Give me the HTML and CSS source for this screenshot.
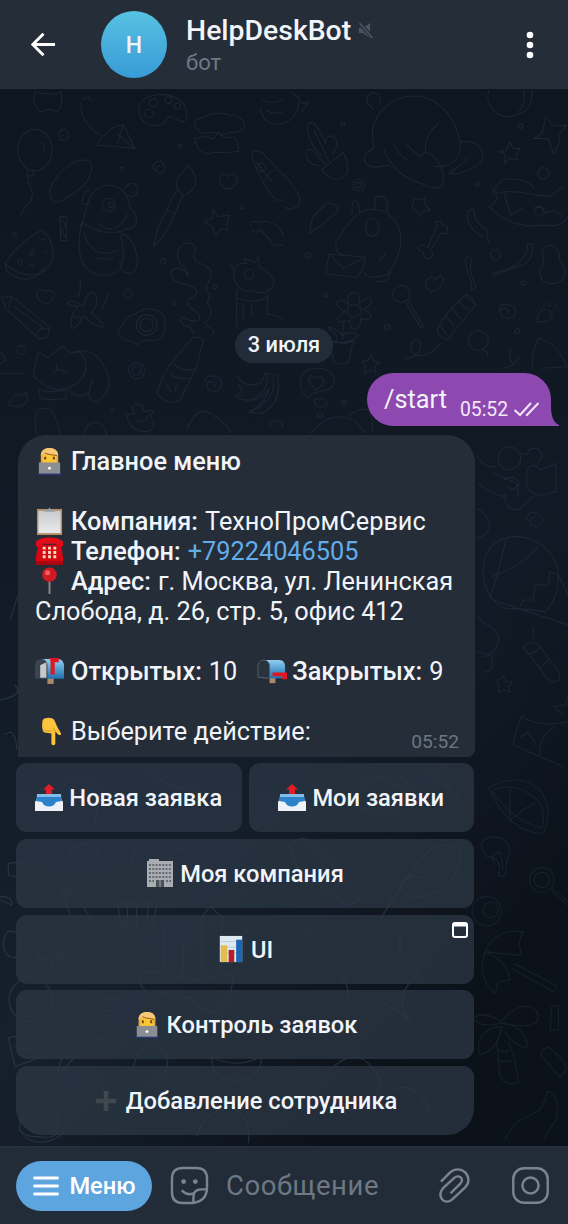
FILE: index.html
```html
<!DOCTYPE html>
<html lang="ru">
<head>
<meta charset="utf-8">
<title>HelpDeskBot</title>
<link rel="stylesheet" href="styles.css">
</head>
<body>
<svg class="defs" width="0" height="0" aria-hidden="true">
  <defs>
    <linearGradient id="blueBox" x1="0" y1="0" x2="0" y2="1"><stop offset="0" stop-color="#8fd0f0"/><stop offset="1" stop-color="#1f6fb0"/></linearGradient>
    <linearGradient id="paper" x1="0" y1="0" x2="0" y2="1"><stop offset="0" stop-color="#c9cbcf"/><stop offset="1" stop-color="#e9eaec"/></linearGradient>
    <symbol id="worker" viewBox="0 0 28 30">
      <path d="M5 17V9C5 3 9 1 14 1s9 2 9 8v8z" fill="#e9a94b"/>
      <path d="M7 9c2-2 11-4 14 0v6c0 3-3 5-7 5s-7-2-7-5z" fill="#fbc737"/>
      <path d="M5 9c0-5 4-8 9-8s9 3 9 8c-5-3-12-3-18 0z" fill="#f6c877"/>
      <path d="M9 6c3 2 8 2 13 3" stroke="#8a5a2b" fill="none"/>
      <path d="M9.500 10v3M18.500 10v3" stroke="#7a4a16" stroke-width="2.200"/>
      <path d="M3 16h22v12H3z" fill="#8b8f93"/><path d="M2 27.500h24v1.500H2z" fill="#2a3478"/>
      <circle cx="14" cy="22" r="1.500" fill="#fff"/>
    </symbol>
    <symbol id="clipboard" viewBox="0 0 28 30">
      <path d="M1 2h26v27H1z" fill="#b78d62"/><path d="M2.500 4h23v23h-23z" fill="url(#paper)"/>
      <path d="M8 5V3h4l2-2.500L16 3h4v2z" fill="#9ba1a8"/>
    </symbol>
    <symbol id="phone" viewBox="0 0 30 30">
      <path d="M1 9V5c4-6 24-6 28 0v4c-2 2-5 2-7 0V7H8v2c-2 2-5 2-7 0z" fill="#e30d1a"/>
      <path d="M4 8h22l2 6 1 8v7H1v-7l1-8z" fill="#d90713"/>
      <path d="M1 25h28v4H1z" fill="#a90511"/>
      <g fill="#f7d9bd"><path d="M8 10h3v3H8zM13.500 10h3v3h-3zM19 10h3v3h-3zM8 14.500h3v3H8zM13.500 14.500h3v3h-3zM19 14.500h3v3h-3zM8 19h3v3H8zM13.500 19h3v3h-3zM19 19h3v3h-3z"/></g>
    </symbol>
    <symbol id="pin" viewBox="0 0 28 30">
      <path d="M14 13v15" stroke="#8b8588" stroke-width="2"/><circle cx="14" cy="8" r="7.500" fill="#cf1a24"/><circle cx="12" cy="6" r="2.600" fill="#f0605f"/>
    </symbol>
    <symbol id="mailOpen" viewBox="0 0 28 28">
      <path d="M12 20h6v6h-6z" fill="#a98a6b"/>
      <path d="M6 2h16c4 0 6 3 6 7v12H6z" fill="url(#blueBox)"/>
      <path d="M0 21V8c0-8 12-8 12 0v13z" fill="#3a4450"/>
      <path d="M5 8l6-3v15H5z" fill="#c6c9cc"/><path d="M14 1h9v4h-4v12h-4V4z" fill="#df1722"/>
    </symbol>
    <symbol id="mailClosed" viewBox="0 0 32 28">
      <path d="M13 20h6v6h-6z" fill="#a98a6b"/>
      <path d="M6 2h17c4 0 6 3 6 7v12H6z" fill="url(#blueBox)"/>
      <path d="M1 20V9c0-9 12-9 12 0v12z" fill="#29323d" stroke="#53606c"/>
      <path d="M16 15h15v7h-5v-3H16z" fill="#df1722"/>
    </symbol>
    <symbol id="pointDown" viewBox="0 0 28 30">
      <path d="M7 3c2-3 10-3 12 0l3 7 4 7c0 2-2 2-3 1l-3-3v12c0 3-4 3-4 0V17l-7-1c-3-1-3-9-2-13z" fill="#fbc43d"/>
      <path d="M8 13c3 2 6 2 8 1M20 15l-2-4" stroke="#dc8f2b" fill="none"/>
    </symbol>
    <symbol id="outbox" viewBox="0 0 28 28">
      <path d="M4 11h20l4 7v9H0v-9z" fill="#eef2f6"/><path d="M2 10h24l1 7-6 1c-2 6-12 6-14 0l-6-1z" fill="#2c83cc"/>
      <path d="M2 10h24v3H2z" fill="#82bce7"/><path d="M14 0l6 5.500h-3V10h-6V5.500H8z" fill="#e11d27"/>
    </symbol>
    <symbol id="office" viewBox="0 0 28 28">
      <path d="M1 2h2V0h10v2h14v26H1z" fill="#a9adb1"/>
      <path d="M3 6h22M3 10h22M3 14h22M3 18h22" stroke="#646b73" stroke-width="2" stroke-dasharray="2 1.300"/>
      <path d="M3 22h5M20 22h5" stroke="#646b73" stroke-width="2" stroke-dasharray="2 1.300"/><path d="M10 21h8v7h-8z" fill="#4b525a"/><path d="M14 21v7" stroke="#a9adb1"/>
    </symbol>
    <symbol id="chart" viewBox="0 0 26 30">
      <path d="M1 1h24v28H1z" fill="#dfe9f2"/><path d="M1 7h24M1 13h24M1 19h24" stroke="#b8cbdc"/>
      <path d="M2 11h7v18H2z" fill="#e3bc4e"/><path d="M10.500 16h6v13h-6z" fill="#b81d25"/><path d="M18.500 5H25v24h-6.500z" fill="#1b67b2"/>
    </symbol>
    <symbol id="plus" viewBox="0 0 24 24"><path d="M9.500 1h5v8.500H23v5h-8.500V23h-5v-8.500H1v-5h8.500z" fill="#42464d"/></symbol>
  </defs>
</svg>

<div class="app">
  <header class="header">
    <svg class="back" viewBox="0 0 26 26"><path d="M25 13H2M13 1.800L1.800 13 13 24.200" /></svg>
    <div class="avatar">H</div>
    <div class="peer">
      <div class="peer-name"><span>HelpDeskBot</span>
        <svg class="muted" viewBox="0 0 16 18"><path d="M1 6h4l7-5v15l-7-5H1z" fill="#4b5460"/><path d="M1 1l14 15" stroke="#252d39" stroke-width="4"/><path d="M1.500 1l13 15" stroke="#4b5460" stroke-width="1.700"/></svg>
      </div>
      <div class="peer-status">бот</div>
    </div>
    <svg class="more" viewBox="0 0 8 28"><circle cx="4" cy="4" r="3.300"/><circle cx="4" cy="14" r="3.300"/><circle cx="4" cy="24" r="3.300"/></svg>
  </header>

  <main class="chat">
    <svg class="doodles" viewBox="0 89 568 1057" aria-hidden="true">
      <g transform="translate(0 90) scale(.3333)">
        <path d="M105 5q-10 30 5 45l10 15 25-8 30 8 10-25V5q-20 15-80 0zM245 30q20-20 30 5M243 35q-5 60 55 98M290 165q40-60 80-60l35 70zM370 105l-20 62M350 130l52 44"/>
        <path d="M417 65c-10-70 150-70 143 10-3 35-20 15-50 5-20 0 0 30-50 27q-35-2-43-42z"/><circle cx="460" cy="38" r="12"/><circle cx="505" cy="30" r="10"/><circle cx="532" cy="48" r="9"/><circle cx="447" cy="70" r="13"/>
        <path d="M585 105c-5-25 30-20 45-32q30-8 60 2c20 0 40 10 45 30q-5 25-40 22-30 12-45 0-60 10-65-22zM590 145q30-10 50 2l15-20 20 17q45-12 40 40-30 5-70 3-55 15-60-42z"/>
        <path d="M785 25q30 25 65 0M780 50q10 65 72 50M795 60q30 15 55 5"/>
        <ellipse cx="105" cy="180" rx="51" ry="62"/><path d="M85 240l-5 18h22l-4-15M85 258q-5 20 10 40 10 30-18 50l-15 28M122 155q20 15 5 35"/>
        <path d="M175 140q0-22 20-22 15 10 10 25-8 12-22 7-5-15 8-15M460 240q-4-28 22-26 18 14 10 30-14 12-24-2 0-18 14-12"/>
        <path d="M150 320c-10-60 100-145 125-95 5 60-65 90-90 108q-25 10-35-13z"/>
        <path d="M245 410c15-60 20-120 80-125q60 5 65 70c25 15 30 65-10 62q-60 30-135-20-30 150 60 158 90 10 55-128M270 300q-20 0-25 40l28 5M375 292c20-20 40-15 38 15q-15 20-30 10M250 425q25 90 105 55M365 430c50 20 60 110 30 120q-40 0-35-40M290 505l50 2"/><circle cx="327" cy="345" r="20"/><circle cx="333" cy="345" r="7"/><path d="M295 400q50 45 90-28"/>
        <path d="M565 225l-35 45q-5 30 20 45 30-5 38-40-5-30-23-50zM530 300l-55 110-15 58q40-35 50-65l40-88M500 360l22 10"/>
        <path d="M660 265q10-20 25-5 20-18 28 5 0 20-25 32-30 0-28-32zM640 358l14 22 35-5-8 30 2 15-20-3-18 20-8-28-25-13 25-12z"/>
        <path d="M755 190q10-15 35 0l62 70M755 190q10 60 70 140h25M770 215q25 35 45 60M795 275q5-30 30-35M750 405q5-15 25-8 40-10 65 20l12 20M755 415q5 20 25 5 25 20 40 45h30"/><circle cx="785" cy="232" r="12"/>
        <path d="M15 520q40-60 110-100 40 30 33 85-15 45-60 50-50 0-83-35l5 23q65 55 115-10M55 510q12-10 12 10-12 10-12-10M90 485q12-12 12 5-10 15-12-5M125 450q12-10 14 5M90 525q12-10 10 10M130 485l12 5M180 380h20v72h-18zM185 390l12 15-12 20 14 20"/>
        <path d="M5 622l30-2 115 92-8 30-25 5-100-92zM35 622l-10 32M42 650l90 65M110 735q0-15 22-20l15 3M110 610q10-20 25-5 20-12 28 8 0 18-25 30-25-5-28-33zM240 570q5 35-8 55M325 612l-18 45M200 645q10-25 50 5 15-60 38-35 10 30-15 55 35 25 37 42-30 0-58-35-35 60-40 25 0-30 22-52zM220 680l28 5"/>
        <path d="M352 722q20-20 30-40 20-5 40-20 30-10 40-2 30 0 33 35 5 65-55 55-20 5-30 15-10-15-40-15z"/><circle cx="440" cy="705" r="31"/><circle cx="440" cy="705" r="20"/>
        <path d="M565 558c-10-25-50-30-53-8 5 30 40 32 60 37 35 15 10 35-5 40-15 20 15 30 30 45 10 25-15 28-48 10-15 5-5 25 20 28l15 20M565 558c5-20-35-30-32-70 5-35 60-40 52-5-20 45 50 35 48 65 8 25-30 40-8 62 10 20-10 25 0 35 25 25-5 45-10 55 20 25 35 15 22 35"/>
        <path d="M575 745q15-10 35 5l-20 80-50 100q-30 20-70-20l15-40 20-40zM520 822q35 30 65 12M510 850q15 20 60 15M500 880l12 25M530 885l-5 20"/>
        <path d="M705 575q-15-60 35-55l-10-15 35 12 10-17 3 30 25 18q30 20 12 45-20 25-60 8-30 10-50-26zM710 600v110M805 610l-5 60 50 15M710 625q50 20 95-5M730 640v55M755 642v40M690 525l15 15"/><circle cx="747" cy="552" r="14"/>
        <path d="M100 850l15-65 28 18 45-35 22 22 30-5q40 55-10 95-60 40-110-5-20-10-20-25zM190 800q70-40 110 10 60 85-10 125-40 0-10-70M118 900q40 10 80 0v25q-40 8-78 0zM205 900q30 30 65 5M170 820v20l-12 15M170 840l30 5"/>
        <circle cx="410" cy="842" r="24"/><circle cx="410" cy="842" r="14"/><path d="M615 880q0-25 25-22 30 5 24 30-10 20-32 15-20-10-5-28 18-2 18 15"/>
        <path d="M712 860q20 35 70 20l15-30 35 5q15 85-45 115l-40-3q45-20 60-70-35 50-100 25l20-20-12-20M800 855q10 60-65 80M820 860q10 75-70 105"/>
        <path d="M25 945l20-32 20 5 15-12 2 30-25 15zM110 1035q-15-75 20-80 40 0 50 80M255 1035q0-35 30-38 30 0 35 38M380 975l25-5-10-20q35-20 35 15l25-5q10 10-5 15 25 35-5 50-45 0-60-30zM405 985q20 20 40-5M560 1020q20-50 50-58 50 15 85 68M0 785q20 20 15 28L0 820M0 850h75M812 1010q0-20 20-17 20 5 15 20"/>
        <circle cx="365" cy="237" r="5"/><circle cx="540" cy="168" r="5"/><circle cx="490" cy="514" r="8"/><circle cx="644" cy="590" r="6"/><circle cx="725" cy="352" r="5"/><circle cx="523" cy="640" r="5"/><circle cx="338" cy="962" r="5"/><circle cx="44" cy="432" r="5"/><circle cx="65" cy="780" r="13"/><circle cx="384" cy="612" r="13"/>
      </g>
      <g transform="translate(284 90) scale(.3333)">
        <path d="M0 100q50-25 45-75L20 5M50 40l23-2-20 28M0 250l45 65q10 40-30 42l-15-5"/>
        <path d="M70 125q-5-35 20-25 25 30 35 60 0-30 25-20 15 15 5 35l-10 20M70 125q15 50 45 75M65 195q5-30 30-5l30 35M65 195q10 35 45 30M112 240l65-52q20 25 12 65-30 25-50 10zM90 120l45 95"/>
        <path d="M250 40q-5-30 20-32 20 0 18 35M250 40l20 18M265 145C260 75 320 20 385 18c80 0 130 60 145 145 0 50-40 75-80 65M265 145l5 30c-50 20-30 65 20 55l30-5M300 180q30 75 110 100 60 30 68-5 5-20-15-60M330 165q20 35 40 45M365 160l40 40q35-30 55 15M425 190q-5-60 40-90M528 155c40-5 70 10 68 50-10 30-70 50-102 45q60-40 55-50"/>
        <path d="M615 0c-20 60 50 95 80 75 50-10 50-50 48-75M700 70q25-20 20-70M750 145l25-15 10-50 25 28 38-2-25 30 5 20-20 35-15-45zM645 185l22-5 10-25 10 20h20l-10 20 2 15-25-5-12 15 2-28z"/>
        <path d="M630 310q10-50 60-42 50 5 60 30M630 310l-5-20M615 350q35-20 20-40 50-10 90 0l70 10 42-30M615 350q70 70 160 55 65 10 75-25M750 355q25-15 35 15 35-20 50 15M660 310l20 65 35-20"/><circle cx="765" cy="365" r="13"/>
        <path d="M155 460q30-60 70-90 30-20 80-5c80 60 35 150 10 180q10 30-35 30M155 460q0 35 25 35M205 370q-5-45 15-35l10 35M275 360q-10-50 15-40 25 0 20 45M285 515l20-25M240 550q25 25 85-5"/><ellipse cx="265" cy="412" rx="20" ry="27"/><path d="M135 492l110 10q-10 45-25 60l-95-10zM138 495l40 40 65-32"/>
        <path d="M390 325l15 5 17-5 2 20 15 15-22 5-10 15-8-18-15-5zM75 430l12-50 38-38q30-10 37 22l-55 45z"/>
        <path d="M460 405q-10 0-5-10 15-5 20 10 20 0 15 20-5 10-20 5l-30 50q15 20-10 27-15-5-10-20-20-5-18-15 10-15 30 0zM550 365q10-10 20-5 0 40 35 55l10 45M550 365q-3 55 50 75M625 550q65-10 90-45 20-20 15-45l17 2c0 60-30 65-65 75l-50 20zM545 505q10-10 20 0-15 30 12 85l-15 10c5-40-20-50-17-95z"/>
        <path d="M775 495q0-30 25-30 30 10 25 45 25 25 15 55-20 25-60 10-25-25 0-50zM425 575q20-25 30-5 20-30 23 5-10 25-35 30-20-10-18-30z"/><circle cx="352" cy="612" r="25"/><path d="M365 635l45 78 8-5-45-78M460 720q15-45 85-105 15-5 30 30l-85 105q-30-10-30-30zM545 615l30 30M525 635l28 25M505 655l25 32M485 678l25 30M465 705l25 30M470 760q-35 45-75 35-25-15-10-40 20-15 25 10 0 35-50 43"/>
        <circle cx="210" cy="662" r="20"/><path d="M195 645c-20-40 40-60 30-2 40-45 55 0 10 17 35 0 35 40-5 25 5 40-40 45-30 5-45 20-55-10-15-25-50-20-20-55 10-20zM160 740l-30-30q40 10 45 30 10-20 50-5-35 30-70 20zM138 752q40 15 70 0l-15 65q-20 10-45 0zM180 690l-5 60"/>
        <circle cx="583" cy="752" r="30"/><path d="M595 780q20 5 15 20M645 835q50 0 60-35M680 775q-10 35 10 50M745 835q0-70 20-90 55 15 85 85l-80 5M645 660q5-25 30-15 30 5 15 35-20 10-35 0-15-25 10-25 15 10 5 15M770 665q10-15 35 5 0 30-45 25-5-10 10-30zM780 650v-15M795 650l5-15M810 655l10-10M50 870c0-45 100-50 102 5-10 40-55 20-75 42-10 15-30-20-27-47zM75 875q0-30 20-10 25-10 25 10-5 15-25 25zM90 930q30-15 40 10-10 20-35 5zM80 1030q60-75 135-35l30 35M190 980q65-50 75 10v35M235 815l18-5 7-15 10 20 18 2-15 12 3 20-15-10-20 12 5-20z"/>
        <circle cx="177" cy="100" r="6"/><circle cx="225" cy="285" r="18"/><circle cx="225" cy="285" r="8"/><circle cx="73" cy="496" r="8"/><circle cx="310" cy="712" r="8"/><circle cx="580" cy="282" r="6"/><circle cx="778" cy="250" r="17"/><circle cx="635" cy="495" r="15"/><circle cx="710" cy="108" r="7"/><circle cx="125" cy="615" r="6"/><circle cx="718" cy="580" r="7"/><circle cx="700" cy="723" r="7"/><circle cx="108" cy="975" r="8"/><circle cx="180" cy="938" r="7"/>
      </g>
      <g transform="translate(230 430) scale(.3333)">
        <circle cx="838" cy="85" r="34"/><path d="M870 70q15 5 25 0-5-15 25-15 30 20 5 40M740 75q20 40 60 35M745 160q50 40 85 40M895 115q15-20 35 5l48-20v88q-10-5-15 0-50 20-72-15-5-35 4-58zM820 150q30-20 50 10-20 30-40 10M825 190q-5 50 40 50l45-40M790 130l70 30 5 40M740 235q60 35 25 80l-25 10M890 270q0-25 25-22 30 10 20 32-15 15-30 5-15-15 8-23"/>
        <path d="M760 430c-10-145 190-145 225-10 0 60-5 90-40 125q-60-10-120-10-60-25-65-105zM830 320q-20 90-50 185M925 350q-50 60-140 90M985 435l30 60M790 510l225 75M985 435l-25-10-5 40h-40l-5 45h-30l-10 20"/>
        <path d="M745 560q15 20 30 25 40 25 30 50-10 50-65 30M760 680l25-5q10 55-20 50M880 650q25-20 45-8l65 90q0 25-28 25zM885 670q35 5 45-25M925 720q20-20 35-35M820 740l8 15 20 2-12 12 5 18-18-8-18 8 2-20-6-15zM875 860q-20 40-25 85l150 65M875 860q60 35 140 15M870 920l25-12 20 30M930 980q-5-60 45-90M910 590v35M1015 800l-10 25-35 5 30 25"/>
      </g>
      <g class="dim" transform="translate(470 780) scale(.3333)">
        <path d="M55 25q80-50 150 0 50 60 15 135-75 0-130-75zM65 30q50 85 150 115 25-90-75-120-40-10-70 5M120 20v105M120 120q50-40 75-50M90 265q-5-35-40-35-40-50 20-60 60 5 45 60-10 20-5 45l-10 15-15-5zM75 255l-10-25 25-15 10 55"/>
        <circle cx="215" cy="300" r="37"/><circle cx="215" cy="300" r="23"/><circle cx="50" cy="394" r="44"/><circle cx="62" cy="390" r="23"/><path d="M245 325l50 40M245 335l48 40M45 515q30-70 115-60-20 30-5 70M45 515q-25 80 30 125l10-35 35-5q-10-60-75-85l110 12M130 550l125 65q10 10-5 20L125 565"/>
        <path d="M95 725q-55-35-85-10 20 30 85 15M95 725c40-60 110-60 110-10-10 35-80 20-110 15 50 0 80 40 75 75q-40-10-65-50M95 740c-60 0-80 50-65 85q55-15 65-85M80 780l10 110q25 35 55 15-10-80-30-120M82 810q30 10 35 0M83 840q30 10 42 0M245 680l20-5v75h-25zM215 830q-5-25 20-28 45 30 55 65l-20 25zM105 1080l30-50 75-40q20-35 20-55 40 0 30 80l-40 65"/>
      </g>
      <g class="bright" transform="translate(0 830) scale(.3333)">
        <path d="M205 85q10-45 65-45 35 20 20 50-30 10-50 0-5 35-35 40M345 95q-10-30 20-35 0-30 30-20 25 20 0 45 10 30-15 25-25 10-35-15M480 90q50-70 120 0M25 100q80-15 90 75l-30 10q-10-45-60-50zM185 170q40 20 80 85 40 55 30 65-20 20-45-5-50-60-65-145zM350 210l15 80q45 30 90 0l20-80q-60 25-125 0M380 215l5 75M410 220v75M445 215l-5 75M0 200q40 0 35 25L0 210M10 350q0-55 30-45 20 0 25 35l-20 45q-30-5-35-35M120 350q25-50 40 0 40-30 45-10-10 30-40 40 70 35 20 50-25 0-35-45-50 15-30-35z"/><circle cx="92" cy="510" r="65"/>
        <path d="M490 420V300l20-10 40 45v95M605 430V260l25-30 35 30v165M420 460q0-50 55-30l110 20 115-20q0 40-20 90-50 60-110-20-40 10-60-20-60 40-90-20M190 520q25 20 30 70l100 45-90 40-55 60q0-50 35-75M25 625q50-20 110 25l-10 30-80 30zM45 650l75 20M300 510l60-10-15 40-35 5M635 680q0 80 80 70 70-10 70-70-80 40-150 0M400 710q20-70 60-70 60 30 35 90l-60 40M60 880q0-40 80-55 50 20 30 60 20 45-60 35-60 0-50-40zM75 920q60 45 140-30M590 920q20-70 95-90 70 20 60 110"/>
      </g>
      <g class="bright">
        <path d="M145 770l25 15 30 8M60 790q20-25 40 0l-5 35M360 790q15-22 30-6 22 0 10 22-20 10-45 0M400 775l30 35M430 770l30 30M290 845q15-15 30 5l40 50-12 5-50-35zM380 920q30-50 50-70 20-10 30 0 5 20-20 40-30 15-40-2 0-15 25-10M400 935v20M310 930l8 8M420 970q-30 30-10 50M330 970q25 10 15 35M380 1000l30 20M330 1070q30-30 50 10 0 30-30 30M390 1090q25-10 40 20M10 620l8-25M0 700q25-5 15-15M5 735q10-10 12 15"/>
      </g>
    </svg>

    <div class="date">3 июля</div>
    <div class="outgoing">
      <span class="command">/start</span><span class="out-time">05:52</span>
      <svg class="checks" viewBox="0 0 28 16"><path d="M1.500 9l5.500 5L18 2M13 13.500l1 .5L25.500 2"/></svg>
      <svg class="tail" viewBox="0 0 12 20"><path d="M0 0H2C2 11 5 17 10 19V20H0z"/></svg>
    </div>

    <section class="message">
      <p><svg class="emoji"><use href="#worker"/></svg><b>Главное меню</b></p>
      <p class="gap"><svg class="emoji"><use href="#clipboard"/></svg><b>Компания:</b><span>ТехноПромСервис</span></p>
      <p><svg class="emoji"><use href="#phone"/></svg><b>Телефон:</b><a>+79224046505</a></p>
      <p><svg class="emoji"><use href="#pin"/></svg><b>Адрес:</b><span>г. Москва, ул. Ленинская</span></p>
      <p><span>Слобода, д. 26, стр. 5, офис 412</span></p>
      <p class="gap"><svg class="emoji"><use href="#mailOpen"/></svg><b>Открытых:</b><span>10</span><svg class="emoji second"><use href="#mailClosed"/></svg><b>Закрытых:</b><span>9</span></p>
      <p class="gap"><svg class="emoji"><use href="#pointDown"/></svg><span>Выберите действие:</span><time>05:52</time></p>
    </section>

    <div class="keyboard">
      <div class="row">
        <button class="key"><svg class="kicon"><use href="#outbox"/></svg><span>Новая заявка</span></button>
        <button class="key"><svg class="kicon"><use href="#outbox"/></svg><span>Мои заявки</span></button>
      </div>
      <button class="key"><svg class="kicon"><use href="#office"/></svg><span>Моя компания</span></button>
      <button class="key"><svg class="kicon"><use href="#chart"/></svg><span>UI</span>
        <svg class="webapp" viewBox="0 0 16 16"><path d="M3 1h10q2 0 2 2v10q0 2-2 2H3q-2 0-2-2V3q0-2 2-2z"/><path d="M2 3h12" stroke-width="3"/></svg></button>
      <button class="key"><svg class="kicon"><use href="#worker"/></svg><span>Контроль заявок</span></button>
      <button class="key last"><svg class="kicon plus"><use href="#plus"/></svg><span>Добавление сотрудника</span></button>
    </div>
  </main>

  <footer class="composer">
    <button class="menu"><svg viewBox="0 0 26 20"><path d="M1.500 2h23M1.500 10h23M1.500 18h23"/></svg><span>Меню</span></button>
    <svg class="tool sticker" viewBox="0 0 38 38"><path d="M37 19V12Q37 1 26 1H12Q1 1 1 12v14q0 11 11 11h10Q37 35 37 21zM23 37v-6q0-8 8-8h6" /><path d="M11 24q6 6 12 3"/><circle class="dot" cx="13" cy="15" r="2.500"/><circle class="dot" cx="25" cy="15" r="2.500"/></svg>
    <span class="placeholder">Сообщение</span>
    <svg class="tool clip" viewBox="0 0 32 36"><path d="M2 14L11 5C16 0 23 .5 27 4.500S32 15 27 20L14 32C10 36 5 35 3 32S0 26 4 21L16 10C20 6 27 11 22 16L12 26"/></svg>
    <svg class="tool camera" viewBox="0 0 38 38"><rect x="1.300" y="1.300" width="35.400" height="35.400" rx="11"/><circle cx="19" cy="19" r="8.300"/></svg>
  </footer>
</div>
</body>
</html>
```
FILE: styles.css
```css
* { box-sizing: border-box; }
body { margin: 0; background: #101722; font-family: Roboto, "Liberation Sans", sans-serif; color: #f1f4f9; }
button { font: inherit; color: inherit; border: 0; padding: 0; }
p { margin: 0; }
.defs { position: absolute; }
.app { width: 568px; height: 1224px; display: flex; flex-direction: column; overflow: hidden; }

.header { height: 89px; flex: none; display: flex; align-items: center; padding: 0 34px 0 31px; background: #252d39; }
.back { width: 25px; height: 25px; margin-right: 45px; fill: none; stroke: #fff; stroke-width: 3; }
.avatar { width: 66px; height: 67px; border-radius: 50%; background: linear-gradient(#57c2e1, #389bd7); display: flex; align-items: center; justify-content: center; font-size: 23px; font-weight: 500; padding-top: 2px; }
.peer { flex: 1; margin-left: 19px; align-self: flex-start; padding-top: 14px; }
.peer-name { display: flex; align-items: center; gap: 7px; height: 33px; font-size: 28.400px; font-weight: 500; }
.muted { width: 16px; height: 18px; fill: none; }
.peer-status { height: 30px; line-height: 32px; font-size: 22px; color: #6f7884; }
.more { width: 8px; height: 28px; fill: #fff; }

.chat { position: relative; flex: 1; display: flex; flex-direction: column; background: linear-gradient(135deg, rgba(9, 14, 20, 0) 60%, rgba(9, 14, 20, .8) 85%), linear-gradient(180deg, #0e161f 0%, #111925 35%, #131c29 65%, #17212e 100%); }
.doodles { position: absolute; inset: 0; width: 568px; height: 1057px; fill: none; stroke: #273643; stroke-opacity: .5; stroke-width: 1.100; stroke-linejoin: round; }
.doodles g[transform] { stroke-width: 3.300; }
.doodles .dim { stroke-opacity: .4; }
.doodles .bright { stroke: #344555; stroke-opacity: .6; }
.date, .outgoing, .message, .keyboard { position: relative; }
.date { align-self: center; margin-top: 239px; width: 98px; height: 35px; border-radius: 18px; background: #222c38; text-align: center; line-height: 34px; font-size: 21.800px; font-weight: 500; }

.outgoing { align-self: flex-end; margin: 10px 17px 0 0; width: 184px; height: 53px; border-radius: 27px 27px 0 27px; background: #8e49b0; display: flex; align-items: flex-end; padding: 0 10px 8px 17px; }
.command { font-size: 25.300px; line-height: 36px; width: 76px; }
.out-time { font-size: 19.300px; line-height: 20px; width: 53px; margin-bottom: -2px; color: #f3e6fa; }
.checks { width: 28px; height: 16px; margin-bottom: 1px; fill: none; stroke: #f3e6fa; stroke-width: 2; }
.tail { position: absolute; right: -10px; bottom: 0; width: 12px; height: 20px; fill: #8e49b0; }

.message { margin: 9px 0 0 18px; width: 457px; height: 322px; padding: 12px 16px 0 17px; border-radius: 28px 28px 8px 0; background: #252d39; font-size: 25.300px; line-height: 30px; }
.message p { display: flex; height: 30px; white-space: nowrap; }
.message p.gap { margin-top: 30px; }
.message b { font-weight: 500; margin-right: 7px; }
.message a { color: #62ade9; }
.emoji { width: 29px; height: 29px; margin-right: 7px; flex: none; }
.emoji.second { margin-left: 20px; width: 31px; margin-right: 4px; }
.message time { margin-left: auto; align-self: flex-end; font-size: 19.200px; line-height: 10px; color: #6c7581; }

.keyboard { margin: 6px 0 0 16px; width: 458px; display: flex; flex-direction: column; gap: 6.750px; }
.row { display: flex; gap: 7px; }
.row .key { flex: 1; }
.key { position: relative; height: 69px; border-radius: 11px; background: rgba(42, 54, 67, .8); display: flex; align-items: center; justify-content: center; gap: 6px; font-size: 23.700px; font-weight: 500; white-space: nowrap; }
.key span { padding-top: 1px; }
.key.last { border-radius: 11px 11px 27px 27px; padding-left: 2px; }
.kicon { width: 28px; height: 28px; flex: none; }
.kicon.plus { width: 22px; height: 22px; margin-right: 3px; }
.webapp { position: absolute; right: 6px; top: 7px; width: 16px; height: 16px; fill: none; stroke: #fff; stroke-width: 2; }

.composer { height: 78px; flex: none; display: flex; align-items: center; padding: 0 19px 0 16px; background: #222c38; border-top: 1px solid #273140; }
.menu { width: 136px; height: 50px; border-radius: 25px; background: #5da5df; display: flex; align-items: center; justify-content: center; gap: 10px; padding-left: 1px; font-size: 23.700px; font-weight: 500; color: #fff; }
.menu svg { width: 26px; height: 20px; fill: none; stroke: #fff; stroke-width: 2.800; stroke-linecap: round; }
.tool { fill: none; stroke: #7a838f; stroke-width: 2.500; flex: none; overflow: visible; }
.sticker { width: 37px; height: 37px; margin-left: 19px; }
.sticker .dot { fill: #7a838f; stroke: none; }
.placeholder { flex: 1; margin-left: 18px; font-size: 27.500px; letter-spacing: .55px; color: #6e7783; }
.clip { width: 31px; height: 35px; margin-right: 42px; }
.camera { width: 37px; height: 37px; }
```
